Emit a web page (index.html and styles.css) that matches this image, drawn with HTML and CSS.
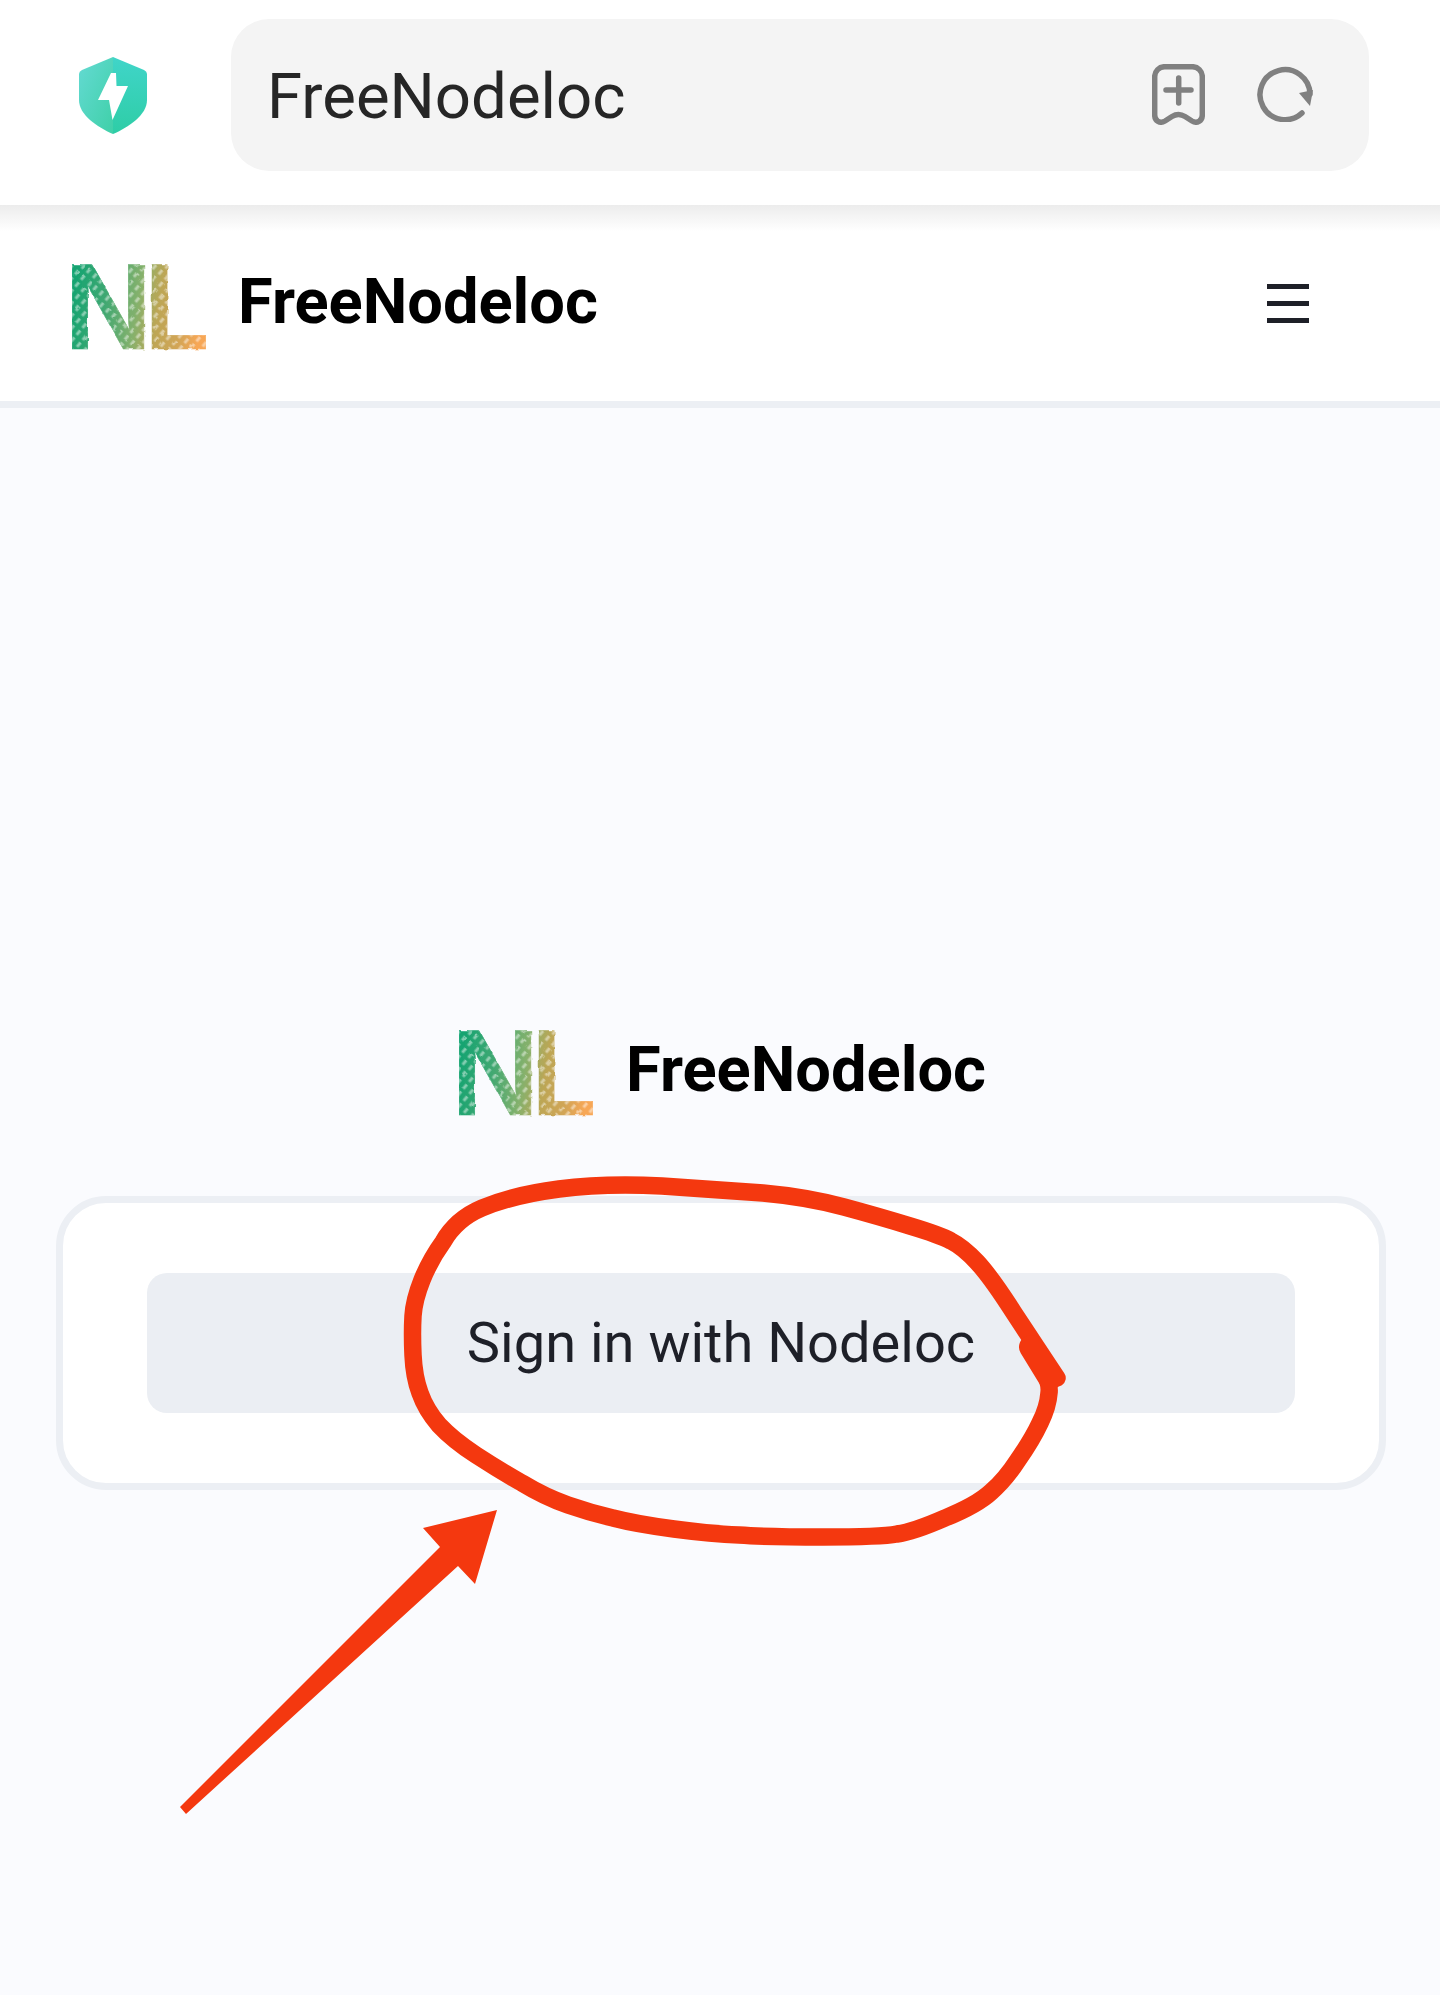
FILE: index.html
```html
<!DOCTYPE html>
<html lang="en">
<head>
    <meta charset="UTF-8">
    <meta name="viewport" content="width=device-width, initial-scale=1.0">
    <title>FreeNodeloc</title>
    <link rel="stylesheet" href="styles.css">
</head>
<body>
    <svg class="defs" width="0" height="0" aria-hidden="true">
        <defs>
            <linearGradient id="nl-colors" gradientUnits="userSpaceOnUse" x1="0" y1="0" x2="135" y2="20">
                <stop offset="0" stop-color="#0fa371"/>
                <stop offset="0.28" stop-color="#3fa872"/>
                <stop offset="0.52" stop-color="#85b16c"/>
                <stop offset="0.68" stop-color="#bda655"/>
                <stop offset="0.86" stop-color="#d3a556"/>
                <stop offset="1" stop-color="#f7a757"/>
            </linearGradient>
            <pattern id="nl-hatch" width="9" height="8" patternUnits="userSpaceOnUse" patternTransform="rotate(-50)">
                <rect x="0.5" y="1.500" width="5.500" height="3" fill="#fff" opacity="0.45"/>
            </pattern>
            <filter id="nl-rough" x="-5%" y="-5%" width="110%" height="110%">
                <feTurbulence type="fractalNoise" baseFrequency="0.09" numOctaves="2" seed="4"/>
                <feDisplacementMap in="SourceGraphic" scale="3"/>
                <feGaussianBlur stdDeviation="0.6"/>
            </filter>
            <symbol id="nl-logo" viewBox="0 0 135 90">
                <g filter="url(#nl-rough)">
                    <g class="nl-letters" fill="url(#nl-colors)" stroke="url(#nl-colors)">
                        <text x="-8" y="88">N</text>
                        <text x="73" y="88" textLength="64" lengthAdjust="spacingAndGlyphs">L</text>
                    </g>
                    <g class="nl-letters" fill="url(#nl-hatch)">
                        <text x="-8" y="88">N</text>
                        <text x="73" y="88" textLength="64" lengthAdjust="spacingAndGlyphs">L</text>
                    </g>
                </g>
            </symbol>
            <linearGradient id="shield-left" x1="0" y1="0" x2="1" y2="1">
                <stop offset="0" stop-color="#64dad3"/>
                <stop offset="1" stop-color="#3fd0a8"/>
            </linearGradient>
            <linearGradient id="shield-right" x1="0" y1="0" x2="0" y2="1">
                <stop offset="0" stop-color="#40d5c9"/>
                <stop offset="1" stop-color="#2ecda6"/>
            </linearGradient>
        </defs>
    </svg>

    <div class="browser-bar">
        <svg class="shield" width="68" height="77" viewBox="0 0 68 77">
            <path d="M34 0 L3 13 Q0 14.500 0 17 V43 C0 58 18 70 34 77 Z" fill="url(#shield-left)"/>
            <path d="M34 0 L65 13 Q68 14.500 68 17 V43 C68 58 50 70 34 77 Z" fill="url(#shield-right)"/>
            <polygon points="32,16 19,43 30,43 33.500,63 49,29 37.500,29 37,16" fill="#fff"/>
        </svg>
        <div class="address">
            <span class="address-text">FreeNodeloc</span>
            <div class="address-icons">
                <svg width="53" height="61" viewBox="0 0 53 61" class="tool-icon">
                    <path d="M13 2.700 H40 A10 10 0 0 1 50.300 13 V51 C50.300 57 45 60 40 57 L33 52.500 C29 50 24 50 20 52.500 L13 57 C8 60 2.700 57 2.700 51 V13 A10 10 0 0 1 13 2.700 Z"/>
                    <path d="M26.700 14 V39 M14 26 H39"/>
                </svg>
                <svg width="56" height="56" viewBox="0 0 56 56" class="tool-icon">
                    <path d="M45 47 A25 25 0 1 1 53 28"/>
                    <polygon class="tool-arrow" points="42,27 56,24 53,40"/>
                </svg>
            </div>
        </div>
    </div>

    <header class="site-header">
        <div class="brand">
            <svg class="nl-mark" width="135" height="90"><use href="#nl-logo"/></svg>
            <span class="brand-name">FreeNodeloc</span>
        </div>
        <button class="menu-btn" aria-label="Menu">
            <span></span><span></span><span></span>
        </button>
    </header>

    <main class="login">
        <div class="brand">
            <svg class="nl-mark" width="135" height="90"><use href="#nl-logo"/></svg>
            <span class="brand-name">FreeNodeloc</span>
        </div>
        <div class="login-card">
            <button class="signin-btn">Sign in with Nodeloc</button>
        </div>
    </main>

    <!-- red marker scribble drawn on top of the screenshot -->
    <svg class="markup" width="1440" height="1995" viewBox="0 0 1440 1995">
        <path class="markup-ring" d="M1057 1378 L1014 1313 Q991 1277 977 1262 Q963 1247 951 1241 Q940 1235 910 1226 Q881 1217 844 1207 Q807 1197 763 1193 Q720 1190 662 1186 Q605 1183 559 1189 Q513 1195 482 1208 Q456 1219 443 1242 Q430 1260 422 1280 Q414 1300 413 1316 Q412 1333 413 1355 Q414 1377 420 1393 Q426 1410 439 1425 Q453 1440 476 1455 Q499 1470 522 1483 Q545 1497 568 1505 Q591 1513 613 1518 Q636 1524 674 1529 Q712 1534 739 1535 Q766 1537 823 1537 Q881 1537 897 1534 Q913 1532 945 1518 Q977 1505 991 1492 Q1005 1480 1018 1460 Q1032 1440 1040 1423 Q1048 1407 1049 1393 Q1051 1380 1033 1348"/>
        <path class="markup-blob" d="M1031 1347 L1050 1378"/>
        <polygon class="markup-arrow" points="180,1807 440,1547 423,1528 497,1510 475,1584 458,1566 186,1814"/>
    </svg>
</body>
</html>
```

FILE: styles.css
```css
body {
    margin: 0;
    padding: 0;
    height: 1995px;
    position: relative;
    overflow: hidden;
    background-color: #fafbfe;
    font-family: Roboto, 'Liberation Sans', sans-serif;
    color: #1e2028;
}

.defs {
    position: absolute;
}

.browser-bar {
    display: flex;
    align-items: center;
    gap: 84px;
    height: 152px;
    padding: 19px 71px 34px 79px;
    background-color: #fff;
}

.shield {
    flex: none;
}

.address {
    flex: 1;
    display: flex;
    align-items: center;
    justify-content: space-between;
    height: 152px;
    padding: 0 56px 0 36px;
    background-color: #f4f4f4;
    border-radius: 38px;
}

.address-text {
    margin-top: 2px;
    font-size: 63.500px;
    color: #262626;
}

.address-icons {
    display: flex;
    align-items: center;
    gap: 52px;
    margin-bottom: 2px;
}

.tool-icon {
    display: block;
    fill: none;
    stroke: #808080;
    stroke-width: 5.500;
    stroke-linecap: round;
    stroke-linejoin: round;
}

.tool-arrow {
    fill: #808080;
    stroke: none;
}

.site-header {
    display: flex;
    align-items: center;
    justify-content: space-between;
    height: 196px;
    padding: 0 131px 0 72px;
    background: linear-gradient(#ececec, #fff 26px);
    border-bottom: 7px solid #eceff4;
}

.site-header .nl-mark {
    margin-top: 6px;
}

.brand {
    display: flex;
    align-items: center;
    gap: 29px;
}

.nl-mark {
    display: block;
    flex: none;
}

.nl-letters {
    font-family: 'Liberation Sans', sans-serif;
    font-weight: bold;
    font-size: 122px;
    stroke-width: 0.500;
}

.brand-name {
    margin-bottom: 7px;
    font-size: 63.200px;
    font-weight: 700;
    color: #000;
}

.site-header .brand-name {
    margin-left: 2px;
    margin-bottom: 5px;
}

.menu-btn {
    display: flex;
    flex-direction: column;
    gap: 12px;
    width: 42px;
    padding: 0;
    background: none;
    border: none;
}

.menu-btn span {
    display: block;
    height: 5px;
    background-color: #1e2028;
}

.login {
    display: flex;
    flex-direction: column;
    align-items: center;
    padding-top: 619px;
}

.login .brand {
    gap: 32px;
    margin-left: 5px;
    margin-bottom: 79px;
}

.login-card {
    box-sizing: border-box;
    width: 1330px;
    margin-left: 2px;
    padding: 70px 84px;
    background-color: #fff;
    border: 7px solid #eceff4;
    border-radius: 50px;
}

.signin-btn {
    display: block;
    width: 100%;
    height: 140px;
    background-color: #ebeef3;
    border: none;
    border-radius: 20px;
    font-family: Roboto, 'Liberation Sans', sans-serif;
    font-size: 56px;
    color: #1e2028;
}

.markup {
    position: absolute;
    top: 0;
    left: 0;
}

.markup-ring {
    fill: none;
    stroke: #f4380f;
    stroke-width: 17.500;
    stroke-linecap: round;
    stroke-linejoin: round;
}

.markup-blob {
    fill: none;
    stroke: #f4380f;
    stroke-width: 24;
    stroke-linecap: round;
}

.markup-arrow {
    fill: #f4380f;
}
```
